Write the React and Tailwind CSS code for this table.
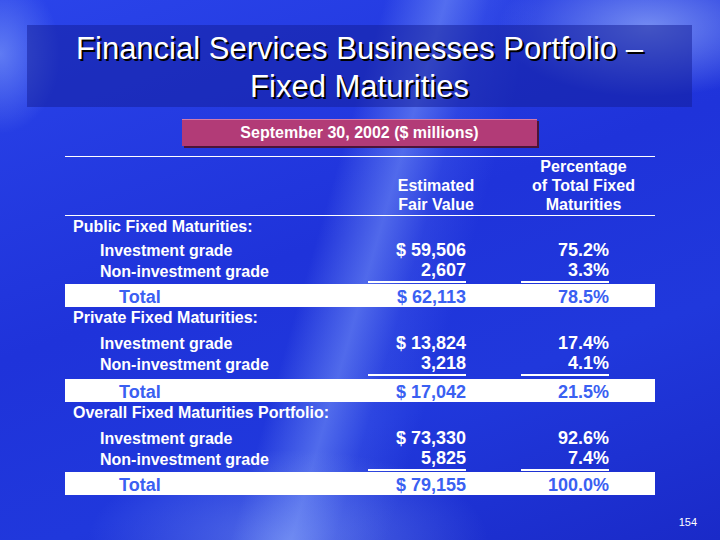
import React from 'react';

const sections = [
  {
    title: 'Public Fixed Maturities:',
    first: true,
    bandGap: 'mt-[1px]',
    rows: [
      { label: 'Investment grade', value: '$ 59,506', pct: '75.2%' },
      { label: 'Non-investment grade', value: '2,607', pct: '3.3%' },
    ],
    total: { value: '$ 62,113', pct: '78.5%' },
  },
  {
    title: 'Private Fixed Maturities:',
    bandGap: 'mt-[3px]',
    rows: [
      { label: 'Investment grade', value: '$ 13,824', pct: '17.4%' },
      { label: 'Non-investment grade', value: '3,218', pct: '4.1%' },
    ],
    total: { value: '$ 17,042', pct: '21.5%' },
  },
  {
    title: 'Overall Fixed Maturities Portfolio:',
    bandGap: 'mt-[1px]',
    rows: [
      { label: 'Investment grade', value: '$ 73,330', pct: '92.6%' },
      { label: 'Non-investment grade', value: '5,825', pct: '7.4%' },
    ],
    total: { value: '$ 79,155', pct: '100.0%' },
  },
];

const grid = 'grid grid-cols-[303px_98px_55px_88px_46px]';

function Section({ section }) {
  const [inv, non] = section.rows;
  return (
    <div>
      {/* section heading */}
      <div className={`${section.first ? 'h-[21px]' : 'h-[23px]'} pl-[8px] text-[16px] font-bold leading-[22px] text-white`}>
        {section.title}
      </div>

      {/* investment grade */}
      <div className={`${grid} h-[23px] items-center text-white font-bold`}>
        <div className="pl-[35px] text-[16px]">{inv.label}</div>
        <div className="text-right text-[18px]">{inv.value}</div>
        <div />
        <div className="text-right text-[18px]">{inv.pct}</div>
      </div>

      {/* non-investment grade, underlined figures */}
      <div className={`${grid} h-[23px] text-white font-bold`}>
        <div className="pl-[35px] text-[16px] leading-[23px]">{non.label}</div>
        <div className="border-b-2 border-white text-right text-[18px] leading-[21px]">{non.value}</div>
        <div />
        <div className="border-b-2 border-white text-right text-[18px] leading-[21px]">{non.pct}</div>
      </div>

      {/* total band */}
      <div className={`${grid} ${section.bandGap} h-[23px] items-center bg-white font-bold text-[18px] text-[#3a60f2]`}>
        <div className="pl-[54px]">Total</div>
        <div className="text-right">{section.total.value}</div>
        <div />
        <div className="text-right">{section.total.pct}</div>
      </div>
    </div>
  );
}

export default function App() {
  return (
    <div
      className="relative flex h-[540px] w-[720px] flex-col overflow-hidden bg-[#2338dc] font-['Liberation_Sans',Arial,sans-serif] bg-[radial-gradient(ellipse_150px_70px_at_90%_5%,rgba(170,195,255,0.6),transparent),radial-gradient(ellipse_60px_80px_at_0%_10%,rgba(150,180,255,0.5),transparent),radial-gradient(ellipse_200px_90px_at_40%_100%,rgba(150,180,255,0.45),transparent),linear-gradient(106deg,transparent_44%,rgba(140,170,255,0.45)_51%,rgba(120,150,255,0.15)_56%,transparent_62%),linear-gradient(160deg,#2a44ea_0%,#1f33da_45%,#2038dc_70%,#1a2ac8_100%)]"
    >
      {/* title */}
      <div className="ml-[27px] mt-[25px] h-[82px] w-[665px] bg-[rgba(18,28,150,0.5)] pt-[5px] text-center text-[31px] leading-[38px] text-white [text-shadow:2px_2px_0_#000]">
        <div>Financial Services Businesses Portfolio –</div>
        <div>Fixed Maturities</div>
      </div>

      {/* date strip */}
      <div className="ml-[182px] mt-[12px] h-[27px] w-[355px] border-t border-[#d47aa8] bg-[#b23b77] text-center text-[16px] font-bold leading-[26px] text-white shadow-[2px_2px_0_#4a1538]">
        September 30, 2002 ($ millions)
      </div>

      {/* table */}
      <div className="ml-[65px] mt-[10px] w-[590px]">
        <div className="grid h-[60px] grid-cols-[293px_156px_139px] items-end border-y border-white pb-[1px] text-center text-[16px] font-bold leading-[19px] text-white">
          <div />
          <div>
            <div>Estimated</div>
            <div>Fair Value</div>
          </div>
          <div>
            <div>Percentage</div>
            <div>of Total Fixed</div>
            <div>Maturities</div>
          </div>
        </div>

        {sections.map((s) => (
          <Section key={s.title} section={s} />
        ))}
      </div>

      <div className="mt-[21px] pr-[23px] text-right text-[11px] leading-[12px] text-white">154</div>
    </div>
  );
}
